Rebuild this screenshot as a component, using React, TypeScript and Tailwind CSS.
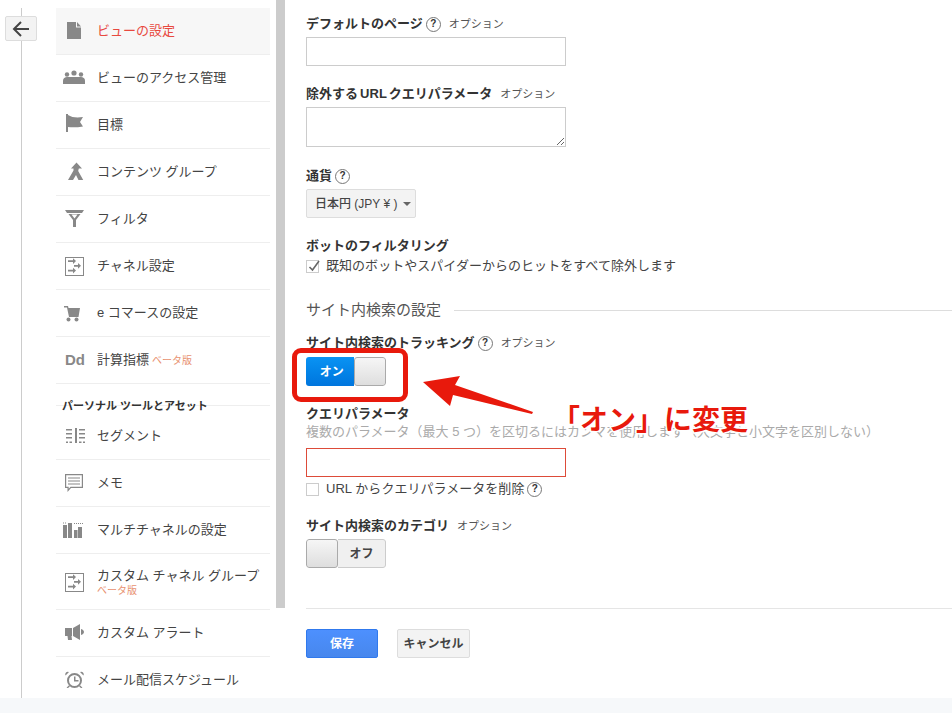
import React from 'react';

const gray = '#888888';

function Svg({ children }: { children: React.ReactNode }) {
  return (
    <svg width="24" height="24" viewBox="0 0 24 24" fill={gray} className="block">
      {children}
    </svg>
  );
}

const ChannelIcon = () => (
  <Svg>
    <rect x="3.5" y="3.5" width="18" height="18" fill="none" stroke={gray} strokeWidth="1" />
    <path d="M6 7h5V5l3 3-3 3V9H6zM12 12h4v-2l3 3-3 3v-2h-4zM6 17h5v-2l3 3-3 3v-2H6z" transform="translate(0 -0.5) scale(1 0.95)" />
  </Svg>
);

const icons: Record<string, React.ReactNode> = {
  doc: (
    <Svg>
      <path d="M5 3h9v5.500h5V20H5z" />
      <path d="M15 3l4 4.500h-4z" />
    </Svg>
  ),
  people: (
    <Svg>
      <circle cx="12" cy="7" r="2.600" />
      <circle cx="5" cy="8.500" r="2.200" />
      <circle cx="19" cy="8.500" r="2.200" />
      <path d="M1 18v-3.500c0-2 2-3.500 4-3.500h14c2 0 4 1.500 4 3.500V18z" />
    </Svg>
  ),
  flag: (
    <Svg>
      <path d="M4 1h2v18H4z" />
      <path d="M6 2c4 2.500 9 3 15 2l-3 5 3 4.500c-6 1-11 1-15 .5z" />
    </Svg>
  ),
  group: (
    <Svg>
      <path d="M14.500 2.500l5.500 6h-3.200l-.6 2.500 5 9h-4.700l-2.500-5-3 5H6l5.500-9.500V8.500H9z" />
    </Svg>
  ),
  filter: (
    <Svg>
      <path d="M3 3h19l-2 3H5z" />
      <path d="M6.500 7h12l-4.500 6v7h-3v-7zM9.500 7.500l3 4 3-4z" fillRule="evenodd" />
    </Svg>
  ),
  channel: <ChannelIcon />,
  cart: (
    <Svg>
      <path d="M2 5h4l.5 2H18l-1.500 9H7L5 6.500H2z" />
      <circle cx="6.500" cy="18.500" r="2" />
      <circle cx="14.500" cy="18.500" r="2" />
    </Svg>
  ),
  dd: (
    <span className="ml-[1px] block w-[24px] text-center text-[15px] leading-[24px] font-bold text-[#888888] [font-family:'Liberation_Sans',sans-serif]">
      Dd
    </span>
  ),
  segment: (
    <Svg>
      <path d="M13 4h2v15h-2zM4 5h6v1.500H4zM4 9h6v1.500H4zM4 13h6v1.500H4zM4 17.500h2V19H4zM7.500 17.500H10V19H7.500zM17 5h6v1.500h-6zM17 9h6v1.500h-6zM17 13h6v1.500h-6zM17 17.500h2.500V19H17zM21 17.500h2V19h-2z" />
    </Svg>
  ),
  memo: (
    <Svg>
      <path d="M3 3h18v14H9l-3.500 4v-4H3zM4.200 4.200v11.600H6.700v2l1.800-2h11.300V4.200z" fillRule="evenodd" />
      <path d="M6 6.500h12v1H6zM6 9.500h12v1H6zM6 12.500h12v1H6z" />
    </Svg>
  ),
  multi: (
    <Svg>
      <path d="M1 7h4v13H1zM6 5h4v15H6zM12 12h3.500v8H12zM16 9h4v11h-4z" />
      <path d="M1 4.500h1v1H1zM3 4.500h1v1H3zM12 5h1v1h-1zM14 5h1v1h-1zM16 5h1v1h-1zM18 5h1v1h-1zM20 5h1v1h-1z" />
    </Svg>
  ),
  alert: (
    <Svg>
      <path d="M3 7h7v8H9.500l.5 4H6l-.5-4H3z" />
      <path d="M11 7l7-4v16l-7-4z" />
      <path d="M19 8c2 .5 3 2 3 3s-1 2.500-3 3z" />
    </Svg>
  ),
  clock: (
    <Svg>
      <circle cx="12.500" cy="12.500" r="6.500" fill="none" stroke={gray} strokeWidth="2" />
      <path d="M12 8.500h1.500v3.500h3v1.500H12z" />
      <path d="M3.500 7.500a2.600 2.600 0 013.500-3.500zM21.500 7.500a2.600 2.600 0 00-3.500-3.500zM6.500 17.500l-2 2.500h1.500l2-1.500zM18.500 17.500l2 2.500H19l-2-1.500z" />
    </Svg>
  ),
};

interface NavRow {
  icon: string;
  label: string;
  beta?: 'inline' | 'below';
  active?: boolean;
}

const topRows: NavRow[] = [
  { icon: 'doc', label: 'ビューの設定', active: true },
  { icon: 'people', label: 'ビューのアクセス管理' },
  { icon: 'flag', label: '目標' },
  { icon: 'group', label: 'コンテンツ グループ' },
  { icon: 'filter', label: 'フィルタ' },
  { icon: 'channel', label: 'チャネル設定' },
  { icon: 'cart', label: 'e コマースの設定' },
  { icon: 'dd', label: '計算指標', beta: 'inline' },
];

const bottomRows: NavRow[] = [
  { icon: 'segment', label: 'セグメント' },
  { icon: 'memo', label: 'メモ' },
  { icon: 'multi', label: 'マルチチャネルの設定' },
  { icon: 'channel', label: 'カスタム チャネル グループ', beta: 'below' },
  { icon: 'alert', label: 'カスタム アラート' },
  { icon: 'clock', label: 'メール配信スケジュール' },
];

function SideRow({ row }: { row: NavRow }) {
  return (
    <div
      className={`flex items-center border-b border-[#eeeeee] ${row.beta === 'below' ? 'h-[56px]' : 'h-[47px]'} ${row.active ? 'bg-[#f7f7f7]' : ''}`}
    >
      <div className="ml-[6px] mr-[11px] w-[24px] shrink-0">{icons[row.icon]}</div>
      <div className={row.beta === 'below' ? 'pt-[2px]' : ''}>
        <div className={`text-[13px] leading-[16px] ${row.active ? 'text-[#e8493f]' : 'text-[#444444]'}`}>
          {row.label}
          {row.beta === 'inline' && <span className="ml-[3px] text-[10px] text-[#e8916f]">ベータ版</span>}
        </div>
        {row.beta === 'below' && <div className="text-[10px] leading-[13px] text-[#e8916f]">ベータ版</div>}
      </div>
    </div>
  );
}

function Help() {
  return (
    <span className="inline-flex h-[15px] w-[15px] items-center justify-center rounded-full border border-[#777777] text-[10px] leading-none font-bold text-[#333333]">
      ?
    </span>
  );
}

function Label({ text, help, option, className }: { text: string; help?: boolean; option?: boolean; className: string }) {
  return (
    <div className={`flex h-[18px] items-center pt-[2px] text-[13px] leading-[16px] [word-spacing:-1.5px] ${className}`}>
      <span className="font-bold text-[#333333]">{text}</span>
      {help && <span className="ml-[3px] flex"><Help /></span>}
      {option && <span className="ml-[8px] text-[11px] text-[#555555]">オプション</span>}
    </div>
  );
}

function CheckRow({ text, checked, help, className }: { text: string; checked?: boolean; help?: boolean; className: string }) {
  return (
    <div className={`flex h-[18px] items-center text-[13px] tracking-[0.04px] text-[#444444] ${className}`}>
      <span className="relative h-[13px] w-[13px] shrink-0 border border-[#cccccc] bg-white">
        {checked && (
          <svg width="15" height="14" viewBox="0 0 15 14" className="absolute left-0 -top-[2px]">
            <path d="M2.500 8l3 3 6.500-9" fill="none" stroke="#666666" strokeWidth="1.600" />
          </svg>
        )}
      </span>
      <span className="ml-[7px]">{text}</span>
      {help && <span className="ml-[3px] flex"><Help /></span>}
    </div>
  );
}

function Toggle({ on, className }: { on?: boolean; className: string }) {
  const knob = <div className="h-full w-[32px] rounded-[3px] border border-[#aaaaaa] bg-gradient-to-b from-[#f6f6f6] to-[#dedede]" />;
  return (
    <div className={`flex h-[29px] w-[80px] overflow-hidden rounded-[3px] text-[12px] font-bold ${className}`}>
      {on ? (
        <>
          <div className="flex w-[49px] items-center justify-center bg-gradient-to-b from-[#0a93f3] to-[#0075dd] pl-[3px] text-white">オン</div>
          {knob}
        </>
      ) : (
        <>
          {knob}
          <div className="flex flex-1 items-center justify-center rounded-r-[3px] border border-l-0 border-[#cccccc] bg-[#f0f0f0] text-[#444444]">オフ</div>
        </>
      )}
    </div>
  );
}

export default function App() {
  return (
    <div className="relative flex h-[713px] w-[952px] flex-col overflow-hidden bg-white [font-family:'Liberation_Sans','Noto_Sans_CJK_JP',sans-serif]">
      <div className="flex h-[698px]">
        {/* back rail */}
        <div className="relative mt-[8px] w-[22px] shrink-0 border-r border-[#cccccc]">
          <button className="absolute left-[5px] top-[8px] flex h-[25px] w-[32px] items-center justify-center rounded-[2px] border border-[#dddddd] bg-[#f3f3f3]">
            <svg width="18" height="16" viewBox="0 0 18 16" fill="none" stroke="#444444" strokeWidth="2">
              <path d="M17 8H2M9 1L2 8l7 7" />
            </svg>
          </button>
        </div>

        {/* sidebar */}
        <div className="ml-[34px] w-[214px] shrink-0 pt-[8px]">
          {topRows.map((row) => (
            <SideRow key={row.label} row={row} />
          ))}
          <div className="mb-[7px] h-[22px] border-b border-[#eeeeee]">
            <div className="pl-[6px] pt-[15px] text-[11px] leading-[14px] font-bold text-[#333333]">パーソナル ツールとアセット</div>
          </div>
          {bottomRows.map((row) => (
            <SideRow key={row.label} row={row} />
          ))}
        </div>

        <div className="ml-[6px] h-[608px] w-[9px] shrink-0 bg-[#cccccc]" />

        {/* settings form */}
        <div className="ml-[21px] flex-1 pt-[14px]">
          <Label text="デフォルトのページ" help option className="" />
          <input className="mt-[5px] block h-[29px] w-[260px] border border-[#cccccc]" />
          <Label text="除外する URL クエリパラメータ" option className="mt-[18px]" />
          <textarea className="mt-[5px] block h-[40px] w-[260px] border border-[#cccccc]" />
          <Label text="通貨" help className="mt-[19px]" />
          <div className="mt-[5px] flex h-[29px] w-[110px] items-center rounded-[2px] border border-[#dddddd] bg-[#f3f3f3] pl-[8px] text-[12px] font-medium text-[#444444]">
            日本円 (JPY ¥ )
            <span className="ml-[6px] h-0 w-0 border-x-[4px] border-t-[4px] border-x-transparent border-t-[#666666]" />
          </div>
          <Label text="ボットのフィルタリング" className="mt-[18px]" />
          <CheckRow text="既知のボットやスパイダーからのヒットをすべて除外します" checked className="mt-[3px]" />

          <div className="mt-[25px] flex h-[20px] items-center">
            <span className="text-[15px] text-[#555555]">サイト内検索の設定</span>
            <span className="ml-[13px] flex-1 border-t border-[#dddddd]" />
          </div>

          <Label text="サイト内検索のトラッキング" help option className="mt-[13px]" />
          <Toggle on className="mt-[6px]" />
          <Label text="クエリパラメータ" className="mt-[18px]" />
          <div className="h-[18px] pt-[1px] text-[13px] leading-[18px] whitespace-nowrap text-[#aaaaaa]">
            複数のパラメータ（最大 5 つ）を区切るにはカンマを使用します（大文字と小文字を区別しない）
          </div>
          <input className="mt-[8px] block h-[29px] w-[260px] border border-[#dd4b39]" />
          <CheckRow text="URL からクエリパラメータを削除" help className="mt-[3px]" />
          <Label text="サイト内検索のカテゴリ" option className="mt-[18px]" />
          <Toggle className="mt-[5px]" />

          <div className="mt-[40px] border-t border-[#e5e5e5]" />
          <div className="mt-[20px] flex">
            <button className="h-[29px] w-[72px] rounded-[2px] border border-[#3079ed] bg-gradient-to-b from-[#4d90fe] to-[#4787ed] text-[12px] font-bold text-white">保存</button>
            <button className="ml-[19px] h-[29px] w-[73px] rounded-[2px] border border-[#dddddd] bg-[#f3f3f3] text-[12px] font-bold text-[#444444]">キャンセル</button>
          </div>
        </div>
      </div>

      <div className="h-[15px] bg-[#f6f8fa]" />

      {/* red annotation over the form */}
      <div className="absolute left-[292px] top-[348px] h-[54px] w-[116px] rounded-[9px] border-[5px] border-[#e8190c]" />
      <svg width="130" height="60" viewBox="0 0 130 60" className="absolute left-[415px] top-[365px]">
        <path d="M8 17L45 11l-5 9 78 27-1 2-79-19-3 11z" fill="#e8190c" />
      </svg>
      <div className="absolute left-[552px] top-[403px] text-[28px] leading-[36px] font-bold whitespace-nowrap text-[#e8190c] [paint-order:stroke] [-webkit-text-stroke:3px_white]">
        「オン」に変更
      </div>
    </div>
  );
}
